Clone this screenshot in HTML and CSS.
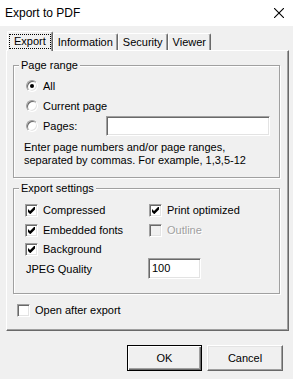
FILE: index.html
```html
<!DOCTYPE html>
<html>
<head>
<meta charset="utf-8">
<title>Export to PDF</title>
<link rel="stylesheet" href="styles.css">
</head>
<body>
<div class="window">
  <div class="titlebar">
    <span class="title">Export to PDF</span>
    <svg class="close" width="10" height="10" viewBox="0 0 10 10"><path d="M0 0 L10 10 M10 0 L0 10" stroke="#000" stroke-width="1.1" fill="none"/></svg>
  </div>
  <div class="client">
    <div class="tabs">
      <div class="tab active"><span class="focus">Export</span></div>
      <div class="tab">Information</div>
      <div class="tab">Security</div>
      <div class="tab">Viewer</div>
    </div>
    <div class="panel">
      <fieldset class="group">
        <legend>Page range</legend>
        <div class="range-body">
          <div class="opt"><span class="radio on"></span><span class="lbl">All</span></div>
          <div class="opt"><span class="radio"></span><span class="lbl">Current page</span></div>
          <div class="opt"><span class="radio"></span><span class="lbl">Pages:</span><span class="edit pages"></span></div>
          <p class="help">Enter page numbers and/or page ranges,<br>separated by commas. For example, 1,3,5-12</p>
        </div>
      </fieldset>
      <fieldset class="group settings">
        <legend>Export settings</legend>
        <div class="settings-body">
          <div class="opt"><span class="check on"><svg viewBox="0 0 13 13" width="13" height="13"><path d="M3 5 L5 7 L9 3 L10 3 L10 5.5 L5.5 10 L5 10 L3 8 Z" fill="#000"/></svg></span><span class="lbl">Compressed</span></div>
          <div class="opt"><span class="check on"><svg viewBox="0 0 13 13" width="13" height="13"><path d="M3 5 L5 7 L9 3 L10 3 L10 5.5 L5.5 10 L5 10 L3 8 Z" fill="#000"/></svg></span><span class="lbl">Print optimized</span></div>
          <div class="opt"><span class="check on"><svg viewBox="0 0 13 13" width="13" height="13"><path d="M3 5 L5 7 L9 3 L10 3 L10 5.5 L5.5 10 L5 10 L3 8 Z" fill="#000"/></svg></span><span class="lbl">Embedded fonts</span></div>
          <div class="opt disabled"><span class="check"></span><span class="lbl">Outline</span></div>
          <div class="opt"><span class="check on"><svg viewBox="0 0 13 13" width="13" height="13"><path d="M3 5 L5 7 L9 3 L10 3 L10 5.5 L5.5 10 L5 10 L3 8 Z" fill="#000"/></svg></span><span class="lbl">Background</span></div>
          <div class="opt"></div>
          <div class="opt"><span class="jpeg">JPEG Quality</span></div>
          <div class="opt"><span class="edit jpeg-edit">100</span></div>
        </div>
      </fieldset>
      <div class="opt open"><span class="check"></span><span class="lbl">Open after export</span></div>
    </div>
    <div class="buttons">
      <button class="btn default">OK</button>
      <button class="btn cancel">Cancel</button>
    </div>
  </div>
</div>
</body>
</html>
```

FILE: styles.css
```css
* { box-sizing: border-box; }
html, body { margin: 0; padding: 0; }
body {
  width: 293px;
  height: 379px;
  overflow: hidden;
  background: #f0f0f0;
  font-family: "Liberation Sans", Arial, sans-serif;
  font-size: 11px;
  color: #000;
}
.window { width: 293px; height: 379px; }
.titlebar {
  height: 26px;
  background: #fff;
  display: flex;
  align-items: center;
  justify-content: space-between;
  padding: 0 9px 0 5px;
}
.title { font-size: 12px; }
.close { display: block; }

.client { padding: 5px 4px 0 6px; }

.tabs {
  display: flex;
  align-items: flex-end;
  height: 19px;
  padding-left: 1px;
}
.tab {
  height: 17px;
  padding: 0 4px;
  border: 1px solid #fff;
  border-bottom: 0;
  border-right-color: #696969;
  border-radius: 2px 2px 0 0;
  box-shadow: inset -1px 0 #a0a0a0;
  line-height: 16px;
  white-space: nowrap;
}
.tab.active {
  height: 20px;
  margin-bottom: -1px;
  padding: 2px 1px 0;
  position: relative;
  z-index: 1;
  background: #f0f0f0;
}
.focus {
  display: block;
  border: 1px dotted #000;
  padding: 0 4px;
  line-height: 13px;
}

.panel {
  border: 1px solid;
  border-color: #fff #696969 #696969 #fff;
  box-shadow: inset -1px -1px #a0a0a0;
  padding: 8px 8px 10px 6px;
}

.group {
  margin: 0;
  padding: 0;
  min-width: 0;
  border: 1px solid #a0a0a0;
  box-shadow: 1px 1px #fff, inset 1px 1px #fff;
}
.group legend {
  margin-left: 5px;
  padding: 0 2px;
  line-height: 13px;
  background: #f0f0f0;
}
.range-body { padding: 4px 9px 10px 12px; }
.settings { margin-top: 4px; }
.settings-body {
  padding: 5px 0 14px 11px;
  display: grid;
  grid-template-columns: 124px 1fr;
  grid-template-rows: 20px 20px 18px 21px;
}

.opt {
  display: flex;
  align-items: center;
  height: 20px;
}
.settings-body .opt { height: auto; }
.lbl { margin-left: 5px; white-space: nowrap; }

.radio {
  width: 12px;
  height: 12px;
  border-radius: 50%;
  border: 1px solid;
  border-color: #a0a0a0 #fff #fff #a0a0a0;
  box-shadow: inset 1px 1px #696969, inset -1px -1px #e3e3e3;
  background: #fff;
  display: flex;
  align-items: center;
  justify-content: center;
  flex: none;
}
.radio.on::after {
  content: "";
  width: 4px;
  height: 4px;
  border-radius: 50%;
  background: #000;
}

.check {
  width: 13px;
  height: 13px;
  border: 1px solid;
  border-color: #a0a0a0 #fff #fff #a0a0a0;
  box-shadow: inset 1px 1px #696969, inset -1px -1px #e3e3e3;
  background: #fff;
  position: relative;
  flex: none;
}
.check svg { position: absolute; left: -1px; top: -1px; }
.disabled .check { background: #f0f0f0; }
.disabled .lbl { color: #a0a0a0; text-shadow: 1px 1px #fff; }

.edit {
  display: block;
  height: 20px;
  border: 1px solid;
  border-color: #a0a0a0 #fff #fff #a0a0a0;
  box-shadow: inset 1px 1px #696969, inset -1px -1px #e3e3e3;
  background: #fff;
}
.pages { width: 164px; margin-left: auto; }
.jpeg { margin-left: 1px; }
.jpeg-edit {
  width: 53px;
  height: 21px;
  margin-left: -1px;
  padding-left: 3px;
  line-height: 19px;
}

.help {
  margin: 5px 0 0 -2px;
  line-height: 13px;
}

.open { margin: 6px 0 0 4px; }

.buttons {
  display: flex;
  justify-content: flex-end;
  gap: 5px;
  margin-top: 14px;
  padding-right: 6px;
}
.btn {
  height: 26px;
  width: 76px;
  padding: 0;
  font: inherit;
  color: #000;
  background: #f0f0f0;
  border: 1px solid;
  border-color: #fff #696969 #696969 #fff;
  box-shadow: inset -1px -1px #a0a0a0, inset 1px 1px #e3e3e3;
}
.btn.default {
  width: 75px;
  border-color: #000;
  box-shadow: inset 1px 1px #fff, inset -1px -1px #696969, inset -2px -2px #a0a0a0;
}
```
